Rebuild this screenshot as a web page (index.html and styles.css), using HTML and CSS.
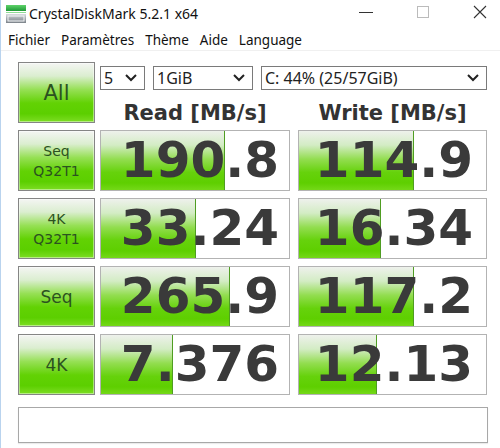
FILE: index.html
```html
<!DOCTYPE html>
<html lang="fr">
<head>
  <meta charset="UTF-8">
  <meta name="viewport" content="width=device-width, initial-scale=1.0">
  <title>CrystalDiskMark 5.2.1 x64</title>
  <link rel="stylesheet" href="styles.css">
</head>
<body>
  <div class="window">
    <div class="titlebar">
      <svg class="app-icon" width="22" height="20" viewBox="0 0 22 20">
        <defs>
          <linearGradient id="g1" x1="0" y1="0" x2="0" y2="1">
            <stop offset="0" stop-color="#5fd36a"/>
            <stop offset="1" stop-color="#1f9a38"/>
          </linearGradient>
          <linearGradient id="g2" x1="0" y1="0" x2="0" y2="1">
            <stop offset="0" stop-color="#d9dde1"/>
            <stop offset="0.5" stop-color="#a3a9af"/>
            <stop offset="1" stop-color="#7d848b"/>
          </linearGradient>
        </defs>
        <rect x="1" y="1" width="20" height="6" fill="url(#g1)"/>
        <rect x="1" y="8" width="20" height="1" fill="#8fdc96"/>
        <rect x="1" y="10" width="20" height="9" fill="url(#g2)"/>
        <rect x="3" y="12" width="16" height="5" fill="none" stroke="#f2f4f6" stroke-width="1"/>
      </svg>
      <span class="title">CrystalDiskMark 5.2.1 x64</span>
      <div class="controls">
        <svg width="16" height="16" viewBox="0 0 16 16"><line x1="1" y1="8.5" x2="15" y2="8.5" stroke="#333" stroke-width="1"/></svg>
        <svg width="16" height="16" viewBox="0 0 16 16"><rect x="2.5" y="2.5" width="11" height="11" fill="none" stroke="#bbb" stroke-width="1"/></svg>
        <svg width="16" height="16" viewBox="0 0 16 16"><path d="M2 2 L14 14 M14 2 L2 14" stroke="#333" stroke-width="1.1"/></svg>
      </div>
    </div>

    <div class="menubar">
      <span>Fichier</span>
      <span>Paramètres</span>
      <span>Thème</span>
      <span>Aide</span>
      <span>Language</span>
    </div>

    <div class="main">
      <div class="row top">
        <div class="btn btn-all">All</div>
        <div class="top-right">
          <div class="selects">
            <div class="select s-count">5<svg class="chev" width="14" height="10" viewBox="0 0 14 10"><path d="M2 2 L7 7 L12 2" fill="none" stroke="#222" stroke-width="2"/></svg></div>
            <div class="select s-size">1GiB<svg class="chev" width="14" height="10" viewBox="0 0 14 10"><path d="M2 2 L7 7 L12 2" fill="none" stroke="#222" stroke-width="2"/></svg></div>
            <div class="select s-drive">C: 44% (25/57GiB)<svg class="chev" width="14" height="10" viewBox="0 0 14 10"><path d="M2 2 L7 7 L12 2" fill="none" stroke="#222" stroke-width="2"/></svg></div>
          </div>
          <div class="headers">
            <span class="head read">Read [MB/s]</span>
            <span class="head write">Write [MB/s]</span>
          </div>
        </div>
      </div>

      <div class="row">
        <div class="btn">Seq<br>Q32T1</div>
        <div class="cell read" style="--fill: 124px">190.8</div>
        <div class="cell write" style="--fill: 115px">114.9</div>
      </div>

      <div class="row">
        <div class="btn">4K<br>Q32T1</div>
        <div class="cell read" style="--fill: 95px">33.24</div>
        <div class="cell write" style="--fill: 82px">16.34</div>
      </div>

      <div class="row">
        <div class="btn btn-big">Seq</div>
        <div class="cell read" style="--fill: 129px">265.9</div>
        <div class="cell write" style="--fill: 115px">117.2</div>
      </div>

      <div class="row">
        <div class="btn btn-big">4K</div>
        <div class="cell read" style="--fill: 72px">7.376</div>
        <div class="cell write" style="--fill: 78px">12.13</div>
      </div>

      <div class="comment"></div>
    </div>
  </div>
</body>
</html>
```

FILE: styles.css
```css
body {
  margin: 0;
  padding: 0;
  background-color: #fff;
  font-family: "Noto Sans", "Open Sans", sans-serif;
  color: #222;
}

.window {
  width: 500px;
  height: 448px;
  box-sizing: border-box;
  border-left: 1px solid #b9d3ee;
  background-color: #fff;
  overflow: hidden;
}

.titlebar {
  height: 30px;
  display: flex;
  align-items: center;
}

.app-icon {
  margin-left: 4px;
  margin-top: -3px;
}

.title {
  margin-left: 2px;
  margin-top: -4px;
  font-size: 14px;
  color: #111;
}

.controls {
  margin-left: auto;
  margin-right: 12px;
  margin-top: -6px;
  display: flex;
  gap: 41px;
}

.menubar {
  height: 20px;
  display: flex;
  align-items: center;
  gap: 11px;
  padding-left: 7px;
  font-size: 13.5px;
  color: #111;
  border-bottom: 1px solid #f0f0f0;
}

.main {
  padding: 11px 0 0 17px;
  display: flex;
  flex-direction: column;
  gap: 7px;
  font-family: "DejaVu Sans", Verdana, sans-serif;
}

.row {
  display: flex;
  gap: 5px;
  height: 61px;
}

.btn {
  width: 77px;
  box-sizing: border-box;
  border: 1px solid #858585;
  background: linear-gradient(#f4f5f3 0%, #dbeed0 22%, #96e055 45%, #62d204 68%, #5ccf00 86%, #7ddd24 100%);
  box-shadow: inset 0 0 0 1px rgba(255, 255, 255, 0.45);
  display: flex;
  align-items: center;
  justify-content: center;
  text-align: center;
  font-size: 14px;
  line-height: 20px;
  color: #2b5220;
}

.btn-all {
  font-size: 21px;
}

.btn-big {
  font-size: 17px;
}

.top-right {
  width: 387px;
  display: flex;
  flex-direction: column;
}

.selects {
  margin-top: 4px;
  display: flex;
  gap: 8px;
}

.select {
  height: 24px;
  box-sizing: border-box;
  border: 1px solid #7a7a7a;
  background-color: #fff;
  display: flex;
  align-items: center;
  padding-left: 3px;
  padding-right: 6px;
  font-family: "Noto Sans", "Open Sans", sans-serif;
  font-size: 16px;
  color: #222;
}

.chev {
  margin-left: auto;
}

.s-count {
  width: 45px;
}

.s-size {
  width: 100px;
}

.s-drive {
  width: 226px;
}

.headers {
  margin-top: 11px;
  display: flex;
  gap: 8px;
}

.head {
  text-align: center;
  font-weight: bold;
  font-size: 21px;
  line-height: 24px;
  color: #333;
}

.head.read {
  width: 190px;
}

.head.write {
  width: 189px;
}

.cell {
  box-sizing: border-box;
  border: 1px solid #b3b3b3;
  font-weight: bold;
  font-size: 50px;
  line-height: 59px;
  text-align: right;
  color: #3a3a3a;
  background:
    linear-gradient(#4f9d22, #4f9d22) calc(var(--fill) - 1px) 0 / 1px 100% no-repeat,
    linear-gradient(#eef1ec 0%, #d3ecc4 24%, #92dd4f 48%, #66d20c 70%, #5ecf00 88%, #74d818 100%) 0 0 / var(--fill) 100% no-repeat,
    #fff;
}

.cell.read {
  width: 190px;
  padding-right: 10px;
}

.cell.write {
  width: 189px;
  margin-left: 3px;
  padding-right: 13px;
}

.comment {
  margin-top: 5px;
  width: 470px;
  height: 36px;
  box-sizing: border-box;
  border: 1px solid #a8a8a8;
  background-color: #fff;
  box-shadow: 0 1px 1px rgba(0, 0, 0, 0.08);
}
```
